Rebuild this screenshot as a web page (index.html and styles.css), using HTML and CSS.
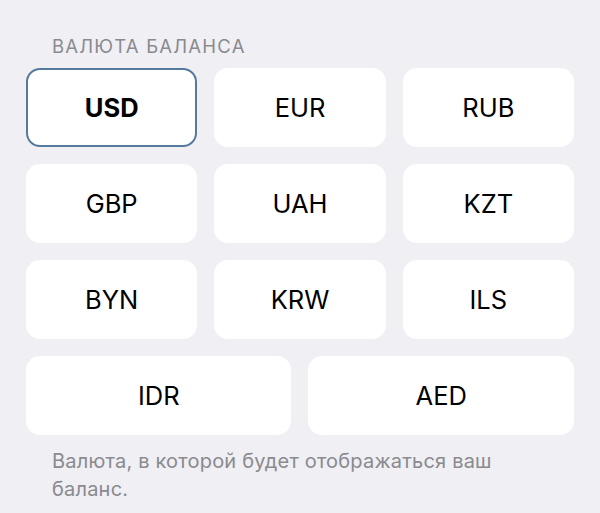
FILE: index.html
```html
<!DOCTYPE html>
<html lang="ru">
<head>
  <meta charset="UTF-8" />
  <meta name="viewport" content="width=device-width, initial-scale=1.0"/>
  <title>Валюта баланса</title>
  <link rel="stylesheet" href="styles.css">
</head>
<body>
  <div class="section">
    <div class="section-title">ВАЛЮТА БАЛАНСА</div>
    <div class="currency-grid">
      <button class="currency selected">USD</button>
      <button class="currency">EUR</button>
      <button class="currency">RUB</button>
      <button class="currency">GBP</button>
      <button class="currency">UAH</button>
      <button class="currency">KZT</button>
      <button class="currency">BYN</button>
      <button class="currency">KRW</button>
      <button class="currency">ILS</button>
      <button class="currency wide">IDR</button>
      <button class="currency wide">AED</button>
    </div>
    <div class="section-footer">Валюта, в которой будет отображаться ваш баланс.</div>
  </div>
</body>
</html>
```

FILE: styles.css
```css
body {
  margin: 0;
  background-color: #efeff4;
  font-family: Inter, "Noto Sans", sans-serif;
  color: #000;
}
.section {
  padding: 33px 26px 0 26px;
  width: 548px;
}
.section-title {
  padding-left: 26px;
  font-size: 18.5px;
  line-height: 26px;
  color: #8a8a8f;
  letter-spacing: 1.2px;
  margin-bottom: 9px;
}
.currency-grid {
  display: grid;
  grid-template-columns: repeat(6, 1fr);
  gap: 17px;
}
.currency {
  grid-column: span 2;
  height: 79px;
  border: none;
  border-radius: 14px;
  background: white;
  font-family: inherit;
  font-size: 25.5px;
  color: #000;
  padding: 0;
}
.currency.wide {
  grid-column: span 3;
}
.currency.selected {
  border: 2.5px solid #56799e;
  font-weight: bold;
}
.section-footer {
  padding: 12px 40px 0 26px;
  font-size: 20px;
  line-height: 28px;
  color: #8a8a8f;
  letter-spacing: 0.2px;
}
```
